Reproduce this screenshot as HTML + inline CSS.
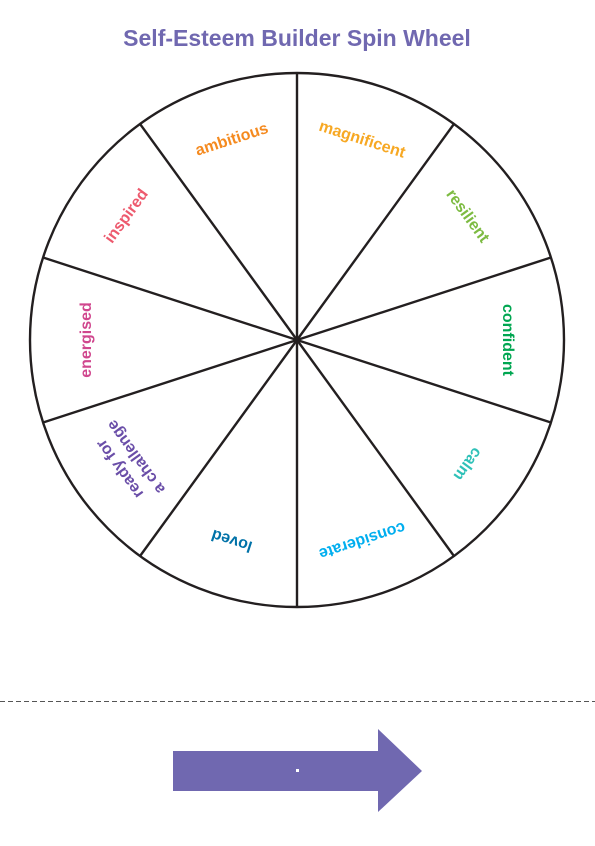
<!DOCTYPE html>
<html><head><meta charset="utf-8"><style>
html,body{margin:0;padding:0;background:#fff;}
body{width:595px;height:841px;overflow:hidden;}
text{font-family:"Liberation Sans",sans-serif;font-weight:bold;}
</style></head><body>
<svg width="595" height="841" viewBox="0 0 595 841" xmlns="http://www.w3.org/2000/svg">
<text x="297" y="46" text-anchor="middle" font-size="23" fill="#7068b0">Self-Esteem Builder Spin Wheel</text>
<g stroke="#231f20" stroke-width="2.4" fill="none">
<circle cx="297" cy="340" r="267"/>
<g transform="translate(297,340)">
<line x1="0" y1="0" x2="0" y2="-267"/>
<line x1="0" y1="0" x2="0" y2="-267" transform="rotate(36)"/>
<line x1="0" y1="0" x2="0" y2="-267" transform="rotate(72)"/>
<line x1="0" y1="0" x2="0" y2="-267" transform="rotate(108)"/>
<line x1="0" y1="0" x2="0" y2="-267" transform="rotate(144)"/>
<line x1="0" y1="0" x2="0" y2="-267" transform="rotate(180)"/>
<line x1="0" y1="0" x2="0" y2="-267" transform="rotate(216)"/>
<line x1="0" y1="0" x2="0" y2="-267" transform="rotate(252)"/>
<line x1="0" y1="0" x2="0" y2="-267" transform="rotate(288)"/>
<line x1="0" y1="0" x2="0" y2="-267" transform="rotate(324)"/>
</g></g>
<g transform="translate(297,340)" font-size="16" text-anchor="middle">
<text transform="rotate(18) translate(0,-206)" fill="#f7a823">magnificent</text>
<text transform="rotate(54) translate(0,-206)" fill="#7dbb42">resilient</text>
<text transform="rotate(90) translate(0,-206)" fill="#00a651">confident</text>
<text transform="rotate(126) translate(0,-206)" fill="#2fc1b8">calm</text>
<text transform="rotate(162) translate(0,-206)" fill="#00aeef">considerate</text>
<text transform="rotate(198) translate(0,-206)" fill="#0072a8">loved</text>
<text transform="rotate(234) translate(0,-214)" fill="#6a4ea8">ready for</text>
<text transform="rotate(234) translate(0,-194)" fill="#6a4ea8">a challenge</text>
<text transform="rotate(270) translate(0,-206)" fill="#d0478e">energised</text>
<text transform="rotate(306) translate(0,-206)" fill="#ed5a6e">inspired</text>
<text transform="rotate(342) translate(0,-206)" fill="#f58a1f">ambitious</text>
</g>
<line x1="0" y1="701.5" x2="595" y2="701.5" stroke="#555" stroke-width="1" stroke-dasharray="5,3"/>
<polygon points="173,751 378,751 378,729 422,771 378,812 378,791 173,791" fill="#7068b0"/>
<rect x="296" y="769" width="3" height="3" fill="#fff"/>
</svg>
</body></html>
